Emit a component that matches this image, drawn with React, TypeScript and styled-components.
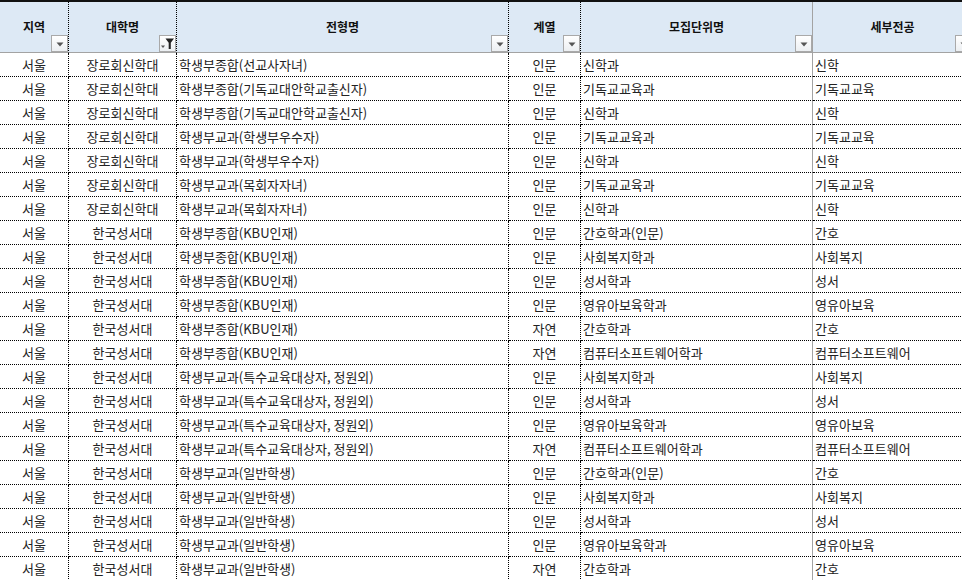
import React from "react";
import styled, { createGlobalStyle } from "styled-components";

const Global = createGlobalStyle`
  html, body { margin: 0; padding: 0; background: #ffffff; overflow: hidden; }
  body { font-family: "Noto Sans CJK KR", "Noto Sans", sans-serif; }
`;

type Align = "center" | "left";

const COLS = "69px 108px 332px 72px 232px 160px";

const HeaderGrid = styled.div`
  display: grid;
  grid-template-columns: ${COLS};
  width: 973px;
  border-top: 2px solid #111;
`;

const BodyGrid = styled.div`
  display: grid;
  grid-template-columns: ${COLS};
  grid-auto-rows: 24px;
  width: 973px;
`;

const HeadCell = styled.div<{ $solid?: boolean }>`
  position: relative;
  height: 51px;
  background: #dde9f5;
  border-bottom: 1px solid #a3a3a3;
  border-right: ${(p) => (p.$solid ? "1px solid #a3a3a3" : "1px dotted #000")};
  display: flex;
  align-items: center;
  justify-content: center;
  font-size: 12px;
  font-weight: 700;
  color: #111;
  box-sizing: border-box;
  padding-bottom: 2px;
`;

const Cell = styled.div<{ $align: Align; $solid?: boolean }>`
  box-sizing: border-box;
  height: 24px;
  border-bottom: 1px dotted #000;
  border-right: ${(p) => (p.$solid ? "1px solid #a3a3a3" : "1px dotted #000")};
  display: flex;
  align-items: center;
  justify-content: ${(p) => (p.$align === "center" ? "center" : "flex-start")};
  padding-left: ${(p) => (p.$align === "center" ? "0" : "2px")};
  font-size: 13px;
  color: #222;
  white-space: nowrap;
  overflow: hidden;
`;

const FilterBtn = styled.div`
  position: absolute;
  right: 0;
  bottom: 0;
  width: 17px;
  height: 17px;
  box-sizing: border-box;
  border: 1px solid #a9a9a9;
  background: linear-gradient(#ffffff, #eceff2);
  display: flex;
  align-items: center;
  justify-content: center;
`;

const Arrow = () => (
  <svg width="8" height="5" viewBox="0 0 8 5" style={{ marginTop: 2 }}>
    <path d="M0.5 0.5 H7.5 L4 4.5 Z" fill="#555" />
  </svg>
);

const FunnelIcon = () => (
  <svg width="15" height="13" viewBox="0 0 15 13">
    <path d="M1 8.5 H5 L3 11 Z" fill="#555" />
    <path d="M5.5 1.5 H14 L10.8 5.8 V12 H8.7 V5.8 Z" fill="#222" />
  </svg>
);

type Col = { title: string; align: Align; solid?: boolean; funnel?: boolean };

const columns: Col[] = [
  { title: "지역", align: "center" },
  { title: "대학명", align: "center", funnel: true },
  { title: "전형명", align: "left" },
  { title: "계열", align: "center" },
  { title: "모집단위명", align: "left", solid: true },
  { title: "세부전공", align: "left" },
];

const J = "장로회신학대";
const H = "한국성서대";
const K = "학생부종합(KBU인재)";
const S = "학생부교과(특수교육대상자, 정원외)";
const G = "학생부교과(일반학생)";

const rows: string[][] = [
  ["서울", J, "학생부종합(선교사자녀)", "인문", "신학과", "신학"],
  ["서울", J, "학생부종합(기독교대안학교출신자)", "인문", "기독교교육과", "기독교교육"],
  ["서울", J, "학생부종합(기독교대안학교출신자)", "인문", "신학과", "신학"],
  ["서울", J, "학생부교과(학생부우수자)", "인문", "기독교교육과", "기독교교육"],
  ["서울", J, "학생부교과(학생부우수자)", "인문", "신학과", "신학"],
  ["서울", J, "학생부교과(목회자자녀)", "인문", "기독교교육과", "기독교교육"],
  ["서울", J, "학생부교과(목회자자녀)", "인문", "신학과", "신학"],
  ["서울", H, K, "인문", "간호학과(인문)", "간호"],
  ["서울", H, K, "인문", "사회복지학과", "사회복지"],
  ["서울", H, K, "인문", "성서학과", "성서"],
  ["서울", H, K, "인문", "영유아보육학과", "영유아보육"],
  ["서울", H, K, "자연", "간호학과", "간호"],
  ["서울", H, K, "자연", "컴퓨터소프트웨어학과", "컴퓨터소프트웨어"],
  ["서울", H, S, "인문", "사회복지학과", "사회복지"],
  ["서울", H, S, "인문", "성서학과", "성서"],
  ["서울", H, S, "인문", "영유아보육학과", "영유아보육"],
  ["서울", H, S, "자연", "컴퓨터소프트웨어학과", "컴퓨터소프트웨어"],
  ["서울", H, G, "인문", "간호학과(인문)", "간호"],
  ["서울", H, G, "인문", "사회복지학과", "사회복지"],
  ["서울", H, G, "인문", "성서학과", "성서"],
  ["서울", H, G, "인문", "영유아보육학과", "영유아보육"],
  ["서울", H, G, "자연", "간호학과", "간호"],
];

const Viewport = styled.div`
  width: 962px;
  height: 580px;
  overflow: hidden;
`;

export default function App() {
  return (
    <>
      <Global />
      <Viewport>
        <HeaderGrid>
          {columns.map((c) => (
            <HeadCell key={c.title} $solid={c.solid}>
              {c.title}
              <FilterBtn>{c.funnel ? <FunnelIcon /> : <Arrow />}</FilterBtn>
            </HeadCell>
          ))}
        </HeaderGrid>
        <BodyGrid>
          {rows.map((r, i) =>
            r.map((v, j) => (
              <Cell key={`${i}-${j}`} $align={columns[j].align} $solid={columns[j].solid}>
                {v}
              </Cell>
            ))
          )}
        </BodyGrid>
      </Viewport>
    </>
  );
}
